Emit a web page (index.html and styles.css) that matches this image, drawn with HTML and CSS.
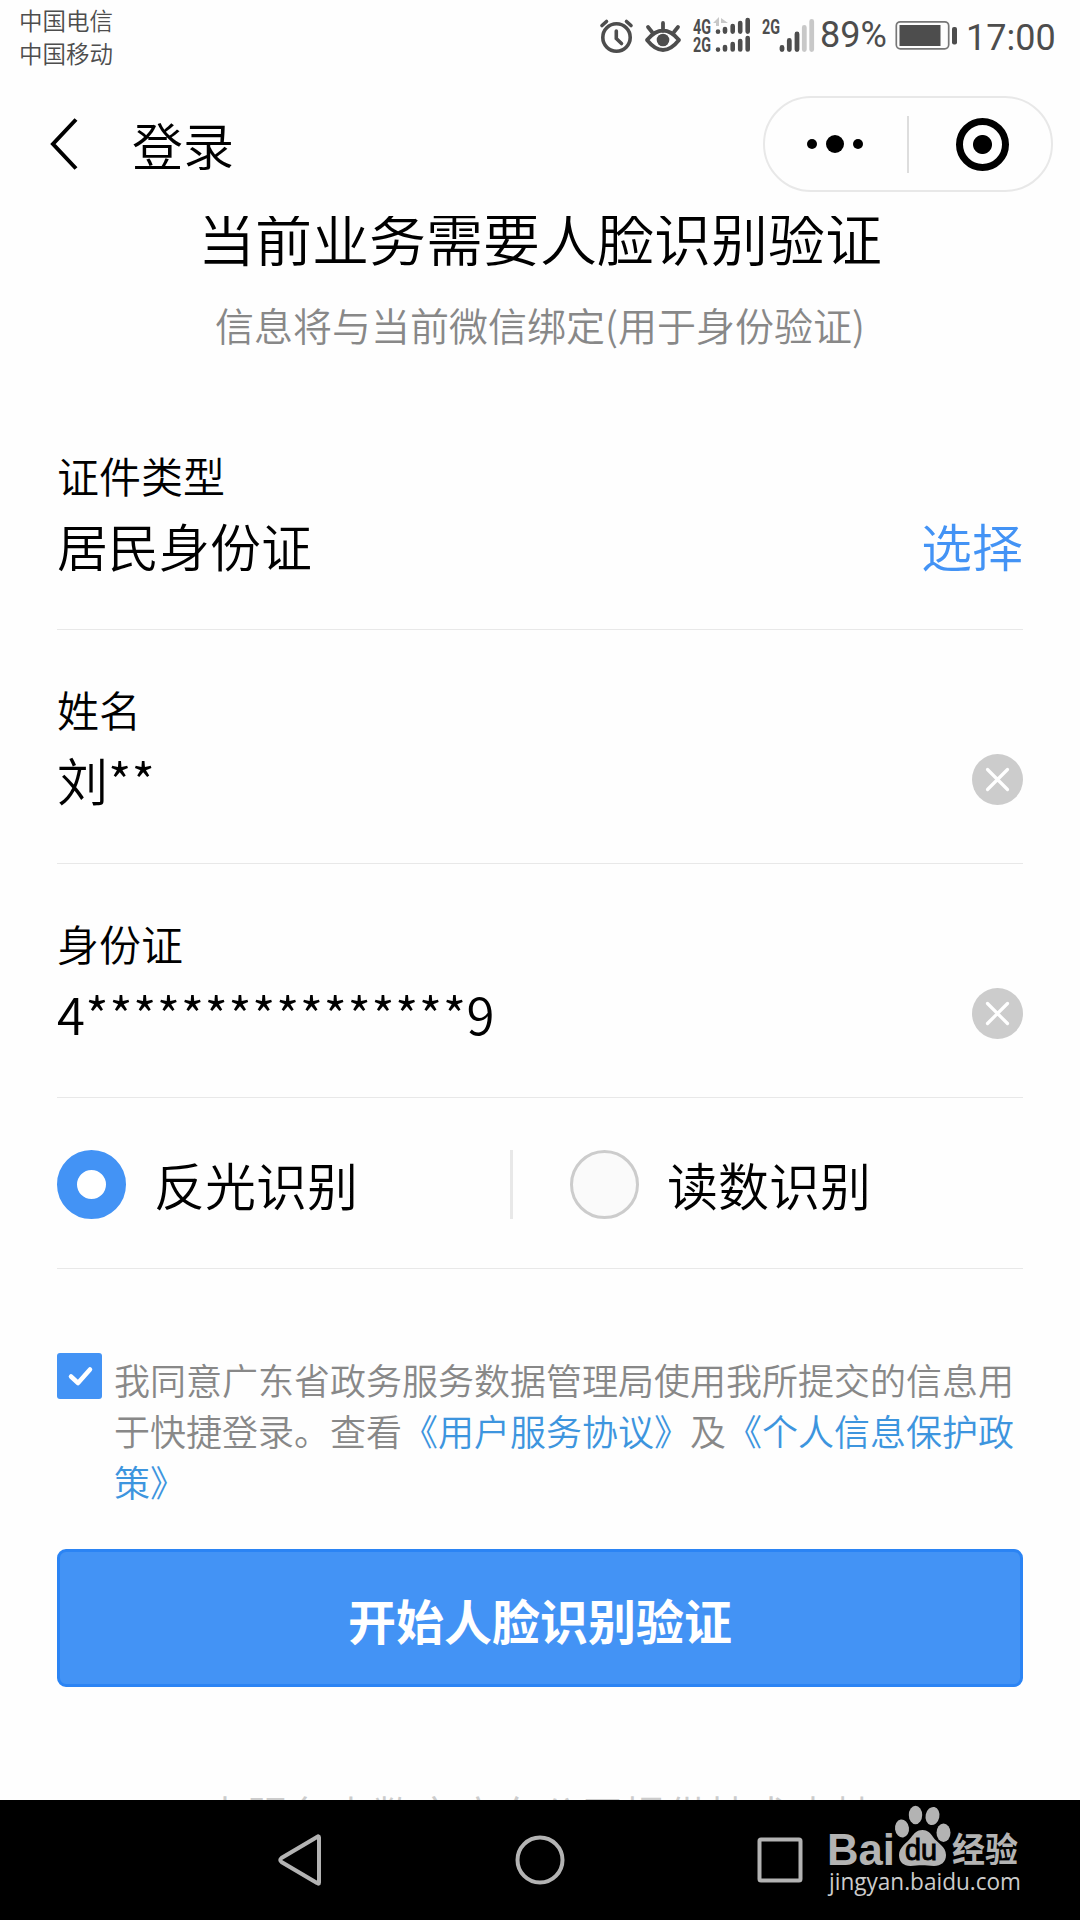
FILE: index.html
```html
<!DOCTYPE html>
<html lang="zh-CN">
<head>
    <meta charset="UTF-8">
    <meta name="viewport" content="width=device-width, initial-scale=1.0">
    <title>登录</title>
    <link rel="stylesheet" href="styles.css">
</head>
<body>

<div class="status-bar">
    <div class="carriers">
        <span>中国电信</span>
        <span>中国移动</span>
    </div>
    <div class="status-icons">
        <svg class="alarm" viewBox="598 0 40 75" fill="none" stroke="#4d4d4d" stroke-width="3.6" stroke-linecap="round">
            <circle cx="616.5" cy="37.5" r="13.7"/>
            <path d="M616.3 31v7.5l5.2 5M602 25.5l4.5-4M631 25.5l-4.5-4"/>
        </svg>
        <svg class="eye" viewBox="638 0 46 75" fill="none" stroke="#4d4d4d" stroke-width="3.8" stroke-linecap="round" stroke-linejoin="round">
            <path d="M647 40q16-19 32 0q-16 20-32 0zM663 31v-8M652 32l-4-5M674 32l4-5"/>
            <circle cx="663" cy="40" r="6.3" fill="#4d4d4d" stroke="none"/>
        </svg>
        <svg class="signal-one" viewBox="684 0 76 75" fill="#4d4d4d">
            <text x="693" y="34" textLength="18" lengthAdjust="spacingAndGlyphs">4G</text>
            <text x="693" y="52" textLength="18" lengthAdjust="spacingAndGlyphs">2G</text>
            <path d="M713 23l6-6v9h-3v-3zM721 18l7 5h-7zM721 23v3" fill="#c8c8c8"/>
            <g stroke="#4d4d4d" stroke-width="4.6" stroke-linecap="round">
                <path d="M718 31.6v.1M725 29v2.6M732.7 26v5.6M740.2 23v8.6M747.7 20v11.6"/>
                <path d="M718 49.5v.1M725 47v2.5M732.7 44v5.5M740.2 41v8.5M747.7 38v11.5"/>
            </g>
        </svg>
        <svg class="signal-two" viewBox="760 0 58 75" fill="#4d4d4d">
            <text x="762" y="34" textLength="18" lengthAdjust="spacingAndGlyphs">2G</text>
            <g stroke-width="4.8" stroke-linecap="round">
                <path d="M782 47.5v2M789.3 40.5v9M797 34v15.5" stroke="#4d4d4d"/>
                <path d="M804.3 27.5v22M811.7 21.5v28" stroke="#c8c8c8"/>
            </g>
        </svg>
        <span class="percent">89%</span>
        <svg class="battery" viewBox="894 0 66 75">
            <rect x="896.3" y="21.8" width="52.4" height="27" rx="4" fill="none" stroke="#777" stroke-width="1.7"/>
            <rect x="899.5" y="25" width="41" height="21" fill="#4d4d4d"/>
            <rect x="952" y="27" width="5" height="17.5" rx="2" fill="#4d4d4d"/>
        </svg>
        <span class="clock">17:00</span>
    </div>
</div>

<header class="nav-bar">
    <svg class="back" width="30" height="54" viewBox="0 0 30 54" fill="none" stroke="#000" stroke-width="4">
        <path d="M27 2.500L4 27l23 24.500"/>
    </svg>
    <h1>登录</h1>
    <div class="capsule">
        <div class="dots"><i></i><i class="big"></i><i></i></div>
        <div class="capsule-line"></div>
        <div class="target"></div>
    </div>
</header>

<main class="content">
    <h2>当前业务需要人脸识别验证</h2>
    <p class="subtitle">信息将与当前微信绑定(用于身份验证)</p>

    <div class="field">
        <label>证件类型</label>
        <div class="value">
            <span>居民身份证</span>
            <a class="choose">选择</a>
        </div>
    </div>
    <div class="field">
        <label>姓名</label>
        <div class="value">
            <span>刘**</span>
            <svg class="clear" viewBox="0 0 51 51">
                <circle cx="25.500" cy="25.500" r="25.500" fill="#ccc"/>
                <path d="M15.500 15.500l20 20M35.500 15.500l-20 20" stroke="#fff" stroke-width="3.200" stroke-linecap="round"/>
            </svg>
        </div>
    </div>
    <div class="field">
        <label>身份证</label>
        <div class="value">
            <span class="id-number">4****************9</span>
            <svg class="clear" viewBox="0 0 51 51">
                <circle cx="25.500" cy="25.500" r="25.500" fill="#ccc"/>
                <path d="M15.500 15.500l20 20M35.500 15.500l-20 20" stroke="#fff" stroke-width="3.200" stroke-linecap="round"/>
            </svg>
        </div>
    </div>

    <div class="modes">
        <div class="mode first"><span class="radio checked"></span>反光识别</div>
        <div class="mode"><span class="radio"></span>读数识别</div>
    </div>

    <div class="agree">
        <svg class="checkbox" viewBox="0 0 45 46">
            <rect width="45" height="46" rx="3" fill="#4393f5"/>
            <path d="M14 23.500l7 6.500 12-13.500" fill="none" stroke="#fff" stroke-width="4.500" stroke-linecap="round" stroke-linejoin="round"/>
        </svg>
        <p>我同意广东省政务服务数据管理局使用我所提交的信息用于快捷登录。查看<a>《用户服务协议》</a>及<a>《个人信息保护政策》</a></p>
    </div>

    <button class="submit">开始人脸识别验证</button>

    <p class="support">本服务由数字广东公司提供技术支持</p>
</main>

<footer class="system-nav">
    <svg viewBox="0 0 60 60"><path d="M49 7.500v45q0 2-2 .5L11.500 32q-2.500-2 0-4L47 7q2-1.500 2 .5z"/></svg>
    <svg viewBox="0 0 60 60"><circle cx="30" cy="30" r="22.500"/></svg>
    <svg viewBox="0 0 60 60"><rect x="9.500" y="9.500" width="41" height="41" rx="1.500"/></svg>
    <svg class="watermark" viewBox="820 1800 210 120" fill="#b3b3b3">
        <text class="bai" x="827" y="1865" textLength="68" lengthAdjust="spacingAndGlyphs">Bai</text>
        <ellipse cx="902" cy="1828.500" rx="7" ry="9" transform="rotate(-8 902 1828.500)"/>
        <ellipse cx="915.500" cy="1815" rx="6.700" ry="9.300"/>
        <ellipse cx="932.500" cy="1816" rx="6.900" ry="9.200" transform="rotate(12 932.500 1816)"/>
        <ellipse cx="943.500" cy="1832.700" rx="7" ry="9.200"/>
        <path d="M922.500 1830c5 0 8 3 10.500 7 4 6 13 9 13 18 0 7-5 11-12 11-5 0-8-.7-12-.7s-7 .7-11.500.7c-7 0-11.500-4-11.500-11 0-8 8-12 12-17.500 3-4 6-7.500 11.500-7.500z"/>
        <text class="du" x="905" y="1860" textLength="32" lengthAdjust="spacingAndGlyphs">du</text>
        <text class="jingyan" x="952" y="1862" textLength="66" lengthAdjust="spacingAndGlyphs">经验</text>
        <text class="site" x="829" y="1890" textLength="192" lengthAdjust="spacingAndGlyphs">jingyan.baidu.com</text>
    </svg>
</footer>

</body>
</html>
```

FILE: styles.css
```css
* {
    box-sizing: border-box;
}
body {
    font-family: 'Noto Sans CJK SC', sans-serif;
    font-weight: 350;
    margin: 0;
    height: 1920px;
    overflow: hidden;
    display: flex;
    flex-direction: column;
    background-color: #fefefe;
    color: #000;
}
h1, h2, p {
    margin: 0;
    font-weight: inherit;
}

.status-bar {
    height: 75px;
    display: flex;
    justify-content: space-between;
    padding: 0 18px 0 19px;
    color: #4d4d4d;
}
.carriers {
    display: flex;
    flex-direction: column;
    padding-top: 4px;
    font-size: 23.5px;
    line-height: 33px;
}
.status-icons {
    display: flex;
    font-family: Roboto, sans-serif;
    font-weight: 400;
    font-size: 36px;
    line-height: 42px;
}
.status-icons svg {
    height: 75px;
}
.status-icons text {
    font-size: 20px;
    font-weight: bold;
}
.alarm {
    width: 40px;
}
.eye {
    width: 46px;
}
.signal-one {
    width: 76px;
}
.signal-two {
    width: 58px;
}
.percent {
    width: 76px;
    padding: 14px 0 0 2px;
}
.battery {
    width: 66px;
}
.clock {
    width: 102px;
    padding: 17px 0 0 6px;
}

.nav-bar {
    height: 141px;
    display: flex;
    align-items: flex-start;
    padding: 21px 27px 0 49px;
}
.back {
    margin-top: 21px;
}
.nav-bar h1 {
    margin-left: 53px;
    padding-top: 12px;
    font-size: 51px;
    line-height: 72px;
}
.capsule {
    width: 290px;
    height: 96px;
    margin-left: auto;
    border: 2px solid #e8e8e8;
    border-radius: 48px;
    display: flex;
    align-items: center;
}
.dots {
    width: 142px;
    padding-right: 2px;
    display: flex;
    align-items: center;
    justify-content: center;
    gap: 9px;
}
.dots i {
    width: 10px;
    height: 10px;
    border-radius: 50%;
    background: #000;
}
.dots .big {
    width: 18px;
    height: 18px;
}
.capsule-line {
    width: 2px;
    height: 57px;
    background: #ddd;
}
.target {
    width: 53px;
    height: 53px;
    margin-left: 47px;
    border: 7px solid #000;
    border-radius: 50%;
    background: radial-gradient(circle, #000 9px, transparent 10px);
}

.content {
    height: 1584px;
    overflow: hidden;
    padding: 0 57px;
}
.content h2 {
    margin-top: -20px;
    font-size: 57px;
    line-height: 80px;
    text-align: center;
}
.subtitle {
    margin: 20px 0 44px;
    font-size: 39px;
    line-height: 56px;
    text-align: center;
    color: #888;
}
.field {
    height: 234px;
    padding-top: 50px;
    border-bottom: 1px solid #e8e8e8;
}
.field label {
    display: block;
    font-size: 42px;
    line-height: 58px;
}
.value {
    margin-top: 5px;
    display: flex;
    align-items: center;
    justify-content: space-between;
    font-size: 51px;
    line-height: 72px;
}
.id-number {
    letter-spacing: 0.36px;
}
.choose {
    color: #4393f5;
}
.clear {
    width: 51px;
    height: 51px;
}

.modes {
    height: 171px;
    padding-top: 2px;
    display: flex;
    align-items: center;
    border-bottom: 1px solid #e8e8e8;
    font-size: 51px;
    line-height: 69px;
}
.mode {
    display: flex;
    align-items: center;
}
.mode.first {
    width: 456px;
    margin-right: 57px;
    border-right: 3px solid #e8e8e8;
}
.radio {
    width: 69px;
    height: 69px;
    margin-right: 28px;
    border: 3px solid #ccc;
    border-radius: 50%;
    background: #fafafa;
}
.radio.checked {
    border: 20px solid #4393f5;
    background: #fff;
}

.agree {
    margin-top: 84px;
    display: flex;
    align-items: flex-start;
    gap: 12px;
}
.checkbox {
    flex: none;
    width: 45px;
    height: 46px;
}
.agree p {
    width: 902px;
    padding-top: 1px;
    font-size: 36px;
    line-height: 51px;
    color: #888;
}
.agree a {
    color: #3d95de;
}
.submit {
    display: block;
    width: 100%;
    height: 138px;
    margin-top: 42px;
    padding: 2px 0 0;
    border: 3px solid #2b84f4;
    border-radius: 9px;
    background: #4393f5;
    color: #fff;
    font-family: inherit;
    font-size: 48px;
    font-weight: bold;
}
.support {
    margin-top: 97px;
    font-size: 42px;
    line-height: 60px;
    text-align: center;
    color: #ccc;
}

.system-nav {
    position: relative;
    height: 120px;
    display: flex;
    justify-content: center;
    align-items: center;
    gap: 180px;
    background: #000;
}
.system-nav svg {
    width: 60px;
    height: 60px;
    fill: none;
    stroke: #b3b3b3;
    stroke-width: 4;
}
/* logo laid over the system bar */
.system-nav .watermark {
    position: absolute;
    top: 0;
    left: 820px;
    width: 210px;
    height: 120px;
    fill: #b3b3b3;
    stroke: none;
}
.bai {
    font: bold 44px 'Liberation Sans', sans-serif;
}
.du {
    font: 29px 'Liberation Sans', sans-serif;
    fill: #000;
    stroke: #000;
    stroke-width: 1;
}
.jingyan {
    font-size: 34px;
    font-weight: bold;
}
.site {
    font: 23px 'Open Sans', sans-serif;
    fill: #ccc;
}
```
